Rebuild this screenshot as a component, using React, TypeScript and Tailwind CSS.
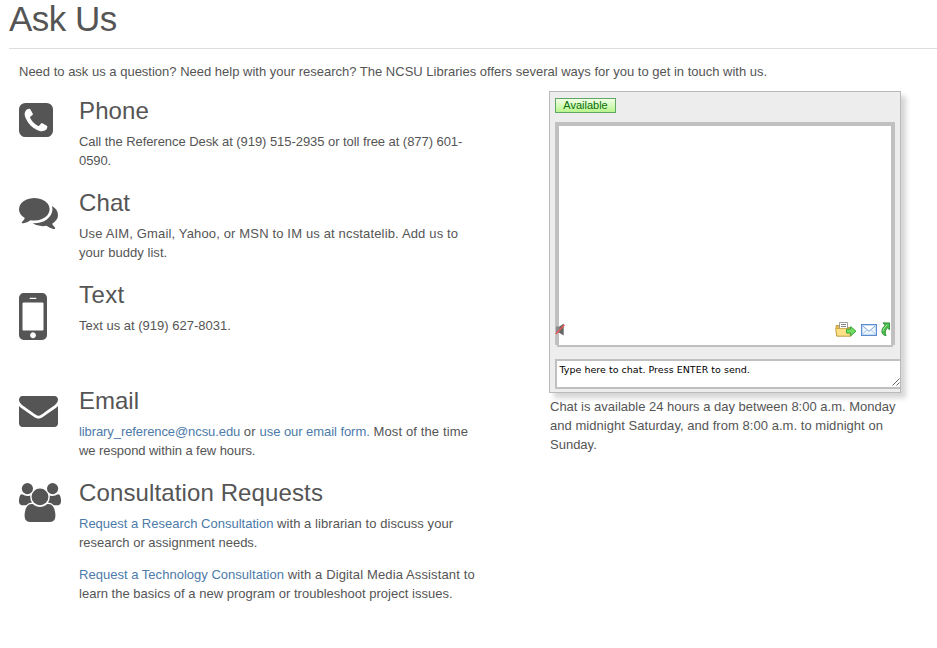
import type { ReactNode } from "react";

const icons = {
  phone: {
    viewBox: "128 128 1536 1536",
    size: "h-[34px] w-[34px]",
    d: "M1408 1193q0-11-2-16-3-8-38.5-29.5t-88.5-49.5l-53-29q-5-3-19-13t-25-15-21-5q-18 0-47 32.5t-57 65.5-44 33q-7 0-16.5-3.5t-15.5-6.5-17-9.5-14-8.5q-99-55-170.5-126.5t-126.5-170.5q-2-3-8.5-14t-9.5-17-6.5-15.5-3.5-16.5q0-13 20.5-33.5t45-38.5 45-39.5 20.5-36.5q0-10-5-21t-15-25-13-19q-3-6-15-28.5t-25-45.5-26.5-47.5-25-40.5-16.5-18-16-2q-48 0-101 22-46 21-80 94.5t-34 130.5q0 16 2.500 34t5 30.500 9 33 10 29.500 12.500 33 11 30q60 164 216.500 320.500t320.500 216.500q6 2 30 11t33 12.500 29.500 10 33 9 30.500 5 34 2.500q57 0 130.500-34t94.500-80q22-53 22-101zm256-777v960q0 119-84.500 203.500t-203.500 84.500h-960q-119 0-203.500-84.500t-84.500-203.500v-960q0-119 84.500-203.500t203.500-84.500h960q119 0 203.500 84.500t84.500 203.500z",
  },
  chat: {
    viewBox: "0 256 1792 1408",
    size: "h-[31px] w-[39px]",
    d: "M1408 768q0 139-94 257t-256.5 186.5-353.5 68.5q-86 0-176-16-124 88-278 128-36 9-86 16h-3q-11 0-20.5-8t-11.5-21q-1-3-1-6.5t.5-6.5 2-6l2.5-5 3.5-5.5 4-5 4.5-5 4-4.5q5-6 23-25t26-29.5 22.5-29 25-38.5 20.5-44q-124-72-195-177t-71-224q0-139 94-257t256.5-186.5 353.5-68.5 353.5 68.5 256.5 186.5 94 257zm384 256q0 120-71 224.5t-195 176.5q10 24 20.5 44t25 38.5 22.5 29 26 29.5 23 25q1 1 4 4.5t4.5 5 4 5 3.5 5.5l2.5 5 2 6 .5 6.5-1 6.5q-3 14-13 22t-22 7q-50-7-86-16-154-40-278-128-90 16-176 16-271 0-472-132 58 4 88 4 161 0 309-45t264-129q125-92 192-212t67-254q0-77-23-152 129 71 204 178t75 230z",
  },
  mobile: {
    viewBox: "512 256 768 1280",
    size: "h-[47px] w-[28px]",
    d: "M976 1408q0-33-23.5-56.5t-56.5-23.5-56.5 23.5-23.5 56.5 23.5 56.5 56.5 23.5 56.5-23.5 23.5-56.5zm208-160v-704q0-13-9.5-22.5t-22.5-9.5h-512q-13 0-22.5 9.5t-9.5 22.5v704q0 13 9.5 22.5t22.5 9.5h512q13 0 22.5-9.5t9.5-22.5zm-192-848q0-16-16-16h-160q-16 0-16 16t16 16h160q16 0 16-16zm288-16v1024q0 52-38 90t-90 38h-512q-52 0-90-38t-38-90v-1024q0-52 38-90t90-38h512q52 0 90 38t38 90z",
  },
  email: {
    viewBox: "0 256 1792 1408",
    size: "h-[31px] w-[39px]",
    d: "M1792 710v794q0 66-47 113t-113 47h-1472q-66 0-113-47t-47-113v-794q44 49 101 87 362 246 497 345 57 42 92.5 65.5t94.5 48 110 24.5h2q51 0 110-24.5t94.5-48 92.5-65.5q170-123 498-345 57-39 100-87zm0-294q0 79-49 151t-122 123q-376 261-468 325-10 7-42.5 31t-54 38.5-52 32.5-57.5 27-50 9h-2q-23 0-50-9t-57.5-27-52-32.5-54-38.5-42.5-31q-91-64-262-182.5t-205-142.5q-62-42-117-115.5t-55-136.5q0-78 41.5-130t118.5-52h1472q65 0 112.5 47t47.5 113z",
  },
  group: {
    viewBox: "0 0 1920 1792",
    size: "h-[39px] w-[42px]",
    d: "M593 896q-162 5-265 128h-134q-82 0-138-40.5t-56-118.5q0-353 124-353 6 0 43.5 21t97.5 42.5 119 21.5q67 0 133-23-5 37-5 66 0 139 81 256zm1071 637q0 120-73 189.5t-194 69.5h-874q-121 0-194-69.5t-73-189.5q0-53 3.5-103.5t14-109 26.5-108.5 43-97.5 62-81 85.5-53.5 111.5-20q10 0 43 21.5t73 48 107 48 135 21.5 135-21.5 107-48 73-48 43-21.5q61 0 111.5 20t85.5 53.5 62 81 43 97.5 26.5 108.5 14 109 3.5 103.5zm-1024-1277q0 106-75 181t-181 75-181-75-75-181 75-181 181-75 181 75 75 181zm704 384q0 159-112.5 271.5t-271.5 112.5-271.5-112.5-112.5-271.5 112.5-271.5 271.5-112.5 271.5 112.5 112.5 271.5zm576 225q0 78-56 118.5t-138 40.5h-134q-103-123-265-128 81-117 81-256 0-29-5-66 66 23 133 23 59 0 119-21.5t97.5-42.5 43.5-21q124 0 124 353zm-128-609q0 106-75 181t-181 75-181-75-75-181 75-181 181-75 181 75 75 181z",
  },
};

function Section({
  icon,
  iconTop,
  height,
  title,
  children,
}: {
  icon: keyof typeof icons;
  iconTop: string;
  height: string;
  title: ReactNode;
  children: ReactNode;
}) {
  const { viewBox, size, d } = icons[icon];
  return (
    <section className={`flex ${height}`}>
      <div className={`w-[60px] shrink-0 ${iconTop}`}>
        <svg viewBox={viewBox} preserveAspectRatio="none" className={size} fill="#555555">
          <path d={d} />
        </svg>
      </div>
      <div>
        <h2 className="mb-[3px] text-[24px] leading-[36px]">{title}</h2>
        {children}
      </div>
    </section>
  );
}

function Line({ tracking = "", children }: { tracking?: string; children: ReactNode }) {
  return <span className={`block whitespace-nowrap ${tracking}`}>{children}</span>;
}

function Link({ tracking = "", children }: { tracking?: string; children: ReactNode }) {
  return <a className={`text-[#4c7aa9] ${tracking}`}>{children}</a>;
}

function MutedIcon() {
  return (
    <svg viewBox="0 0 11 13" className="h-[13px] w-[11px]">
      <path d="M1 3.500h4V10H1z" fill="#8a8a8a" />
      <path d="M4.500 3.500 8.700.500v12L4.500 10z" fill="#666" />
      <path d="M.8 11 9.500 1.800" stroke="#e85a55" strokeWidth="1.500" />
    </svg>
  );
}

function SendFileIcon() {
  return (
    <svg viewBox="0 0 22 15" className="h-[15px] w-[22px]">
      <path d="M1 3.500h4v2h11V14H1.500z" fill="#e6c35a" stroke="#b8923a" strokeWidth=".8" />
      <path d="M4.500.5h8v7h-8z" fill="#fff" stroke="#888" strokeWidth=".8" />
      <path d="M6 2.500h5M6 4.500h5" stroke="#777" strokeWidth=".9" />
      <path d="M.6 6.500h13.500l1.500 7.600H2z" fill="#fbe088" stroke="#c79f3f" strokeWidth=".8" />
      <path d="M11.500 7.200h4.200V4.600l5.300 4.600-5.300 4.600v-2.700h-4.200z" fill="#6fdc62" stroke="#35a035" strokeWidth=".9" />
    </svg>
  );
}

function MailIcon() {
  return (
    <svg viewBox="0 0 16 12" className="h-[12px] w-[16px]">
      <path d="M.6.6h14.800v10.800H.6z" fill="#eaf4fd" stroke="#5b8bd0" strokeWidth="1.200" />
      <path d="m2 10 4-4.200M14 10l-4-4.200" stroke="#a9c6ea" strokeWidth=".9" />
      <path d="m1.800 2 6.200 5.200L14.200 2" fill="#fff" stroke="#7aa4dc" strokeWidth="1" />
    </svg>
  );
}

function PopOutIcon() {
  return (
    <svg viewBox="0 0 10 15" className="h-[15px] w-[10px]">
      <path
        d="M3 .9h6.500v6.800L7.600 5.900C5.200 7.500 4.600 10.300 6 13.700 1.300 13 0 7.500 5.200 3.300z"
        fill="#4fbf4f"
        stroke="#238a2b"
        strokeWidth=".9"
      />
      <path d="M2.900 9C3.200 6.800 5 5 7.200 2.800" fill="none" stroke="#a5eb9b" strokeWidth="1" />
    </svg>
  );
}

function ChatBox() {
  return (
    <div className="h-[302px] w-[352px] overflow-hidden border border-[#b9bbbb] bg-[#ededed] pl-[5px] pt-[6px] shadow-[5px_5px_5px_#d6d6d6]">
      <div className="h-[15px] w-[61px] border border-[#5fa863] bg-linear-to-b from-[#f1ffe6] to-[#b9f58c] text-center text-[11px] leading-[13px] text-[#0b6e0b]">
        Available
      </div>
      <div className="mt-[9px] h-[223px] w-[340px] border-x-2 border-t-2 border-[#c0c0c0]">
        <div className="flex h-[223px] items-end justify-between border-2 border-[#c0c0c0] bg-white pb-[8px]">
          <div className="-ml-[4px] mb-px">
            <MutedIcon />
          </div>
          <div className="mr-px flex items-center">
            <SendFileIcon />
            <span className="ml-[4px] mr-[3px]">
              <MailIcon />
            </span>
            <PopOutIcon />
          </div>
        </div>
      </div>
      <div className="mt-[14px] flex h-[30px] w-[350px] justify-between border-2 border-[#c0c0c0] bg-white pl-[2.5px] pt-[2px] font-['DejaVu_Sans',sans-serif] text-[9.5px] leading-[13px] text-black">
        <span className="whitespace-nowrap tracking-[0.02px]">Type here to chat. Press ENTER to send.</span>
        <svg viewBox="0 0 8 8" className="mr-[3px] mt-[15px] h-[8px] w-[8px]">
          <path d="M.5 7.500 7.500.5M4.500 7.500l3-3" stroke="#555" strokeWidth=".9" />
        </svg>
      </div>
    </div>
  );
}

export default function App() {
  return (
    <div className="h-[648px] w-[937px] overflow-hidden bg-white pl-[9px] font-['Liberation_Sans',Arial,sans-serif] text-[13px] leading-[19px] text-[#555555]">
      <h1 className="h-[49px] border-b border-[#dddddd] text-[35px] leading-[38px] tracking-[-0.5px]">Ask Us</h1>
      <p className="ml-[10px] mt-[13px] whitespace-nowrap">
        Need to ask us a question? Need help with your research? The NCSU Libraries offers several ways for you to
        get in touch with us.
      </p>
      <div className="ml-[10px] mt-[10px] flex">
        <div className="mt-[2px] w-[530px]">
          <Section icon="phone" iconTop="pt-[10px]" height="h-[92px]" title={<span className="tracking-[0.12px]">Phone</span>}>
            <Line tracking="tracking-[-0.06px]">Call the Reference Desk at (919) 515-2935 or toll free at (877) 601-</Line>
            <Line tracking="tracking-[-0.1px]">0590.</Line>
          </Section>
          <Section icon="chat" iconTop="pt-[13px]" height="h-[92px]" title={<span className="tracking-[0.1px]">Chat</span>}>
            <Line tracking="tracking-[0.155px]">Use AIM, Gmail, Yahoo, or MSN to IM us at ncstatelib. Add us to</Line>
            <Line tracking="tracking-[0.05px]">your buddy list.</Line>
          </Section>
          <Section icon="mobile" iconTop="pt-[16px]" height="h-[106px]" title={<span className="tracking-[0.4px]">Text</span>}>
            <Line>Text us at (919) 627-8031.</Line>
          </Section>
          <Section icon="email" iconTop="pt-[13px]" height="h-[92px]" title="Email">
            <Line>
              <Link tracking="tracking-[-0.09px]">library_reference@ncsu.edu</Link>{" "}
              <span className="tracking-[0.2px]">or </span>
              <Link tracking="tracking-[-0.06px]">use our email form.</Link>
              <span className="tracking-[0.13px]"> Most of the time</span>
            </Line>
            <Line tracking="tracking-[-0.07px]">we respond within a few hours.</Line>
          </Section>
          <Section
            icon="group"
            iconTop="pt-[8px]"
            height="h-[150px]"
            title={<span className="tracking-[0.12px]">Consultation Requests</span>}
          >
            <Line>
              <Link>Request a Research Consultation</Link>
              <span className="tracking-[0.06px]"> with a librarian to discuss your</span>
            </Line>
            <Line>research or assignment needs.</Line>
            <p className="mt-[13px]">
              <Line>
                <Link tracking="tracking-[0.02px]">Request a Technology Consultation</Link>
                <span className="tracking-[0.13px]"> with a Digital Media Assistant to</span>
              </Line>
              <Line tracking="tracking-[0.01px]">learn the basics of a new program or troubleshoot project issues.</Line>
            </p>
          </Section>
        </div>
        <div>
          <ChatBox />
          <p className="ml-px mt-[4px]">
            <Line>Chat is available 24 hours a day between 8:00 a.m. Monday</Line>
            <Line tracking="tracking-[0.04px]">and midnight Saturday, and from 8:00 a.m. to midnight on</Line>
            <Line>Sunday.</Line>
          </p>
        </div>
      </div>
    </div>
  );
}
